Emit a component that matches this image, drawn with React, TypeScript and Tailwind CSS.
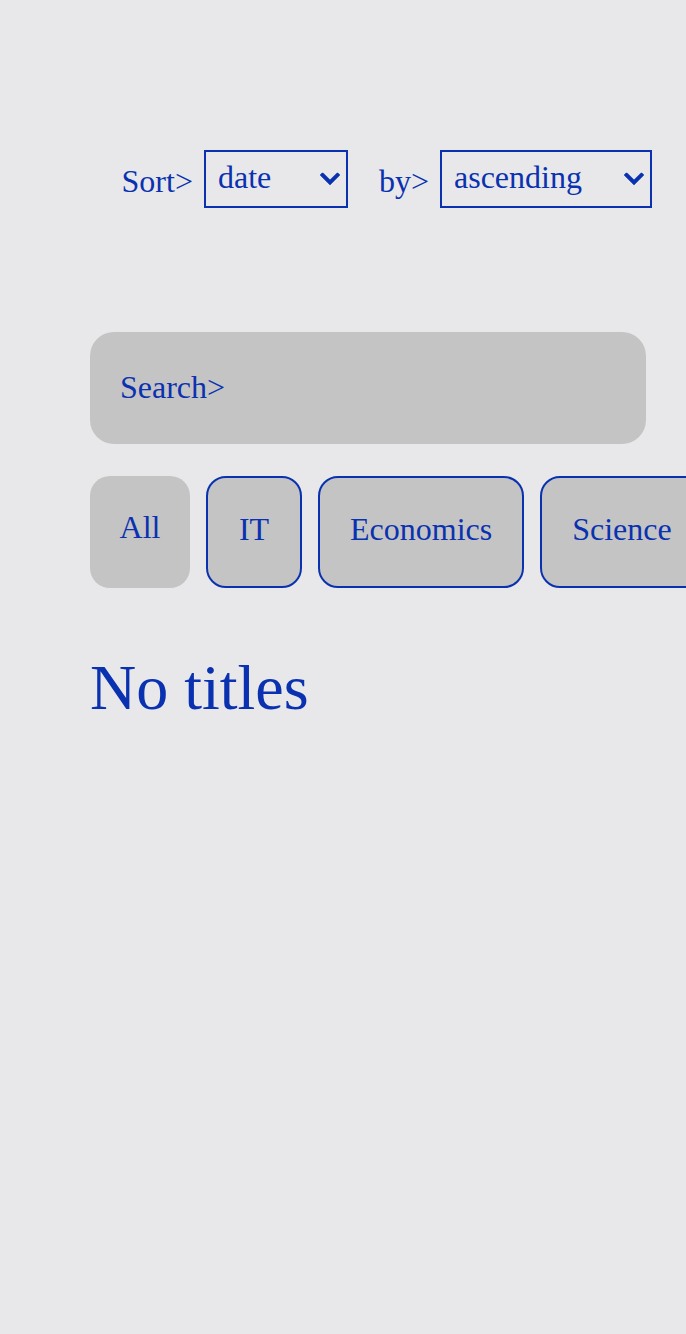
import React, { useState } from "react";

const categories = ["All", "IT", "Economics", "Science"];

const Chevron = () => (
  <svg
    className="pointer-events-none absolute right-[8px] top-1/2 -translate-y-1/2"
    width="20"
    height="13"
    viewBox="0 0 20 13"
    fill="none"
  >
    <path d="M2.5 2.5 L10 10 L17.5 2.5" stroke="#0a32b0" strokeWidth="4" strokeLinecap="square" />
  </svg>
);

const SortSelect = ({ options, width }: { options: string[]; width: string }) => {
  const [value, setValue] = useState(options[0]);
  return (
    <div className={`relative ${width} h-[58px]`}>
      <select
        value={value}
        onChange={e => setValue(e.target.value)}
        className="appearance-none w-full h-full border-2 border-[#0a32b0] bg-transparent pl-[12px] pb-[4px] text-[32px] leading-[36px] text-[#0a32b0] outline-none font-['Liberation_Serif',serif]"
      >
        {options.map(o => (
          <option key={o} value={o}>
            {o}
          </option>
        ))}
      </select>
      <Chevron />
    </div>
  );
};

const App = () => {
  const [active, setActive] = useState("All");
  const [query, setQuery] = useState("");

  return (
    <div className="min-h-screen w-full overflow-hidden bg-[#e8e8ea] text-[#0a32b0] font-['Liberation_Serif',serif]">
      {/* sort controls */}
      <div className="flex items-center justify-end pt-[150px] pr-[34px]">
        <span className="mt-[4px] text-[32px] leading-[36px]">Sort&gt;</span>
        <div className="ml-[11px]">
          <SortSelect options={["date", "title"]} width="w-[144px]" />
        </div>
        <span className="ml-[31px] mt-[4px] text-[32px] leading-[36px]">by&gt;</span>
        <div className="ml-[11px]">
          <SortSelect options={["ascending", "descending"]} width="w-[212px]" />
        </div>
      </div>

      {/* search */}
      <div className="mt-[124px] ml-[90px] w-[556px] h-[112px] rounded-[24px] bg-[#c4c4c4] flex items-center px-[30px]">
        <input
          value={query}
          onChange={e => setQuery(e.target.value)}
          placeholder="Search>"
          className="w-full bg-transparent pb-[2px] text-[32px] leading-[36px] text-[#0a32b0] placeholder:text-[#0a32b0] outline-none font-['Liberation_Serif',serif]"
        />
      </div>

      {/* categories */}
      <div className="mt-[32px] pl-[90px] flex gap-4 whitespace-nowrap">
        {categories.map(c => (
          <button
            key={c}
            onClick={() => setActive(c)}
            className={
              c === active
                ? "shrink-0 h-[112px] min-w-[100px] rounded-[20px] bg-[#c4c4c4] px-[29px] pb-[10px] text-[32px] leading-[36px] text-[#0a32b0] font-['Liberation_Serif',serif]"
                : "shrink-0 h-[112px] min-w-[96px] rounded-[20px] border-2 border-[#0a32b0] bg-[#c4c4c4] px-[30px] pb-[6px] text-[32px] leading-[36px] text-[#0a32b0] font-['Liberation_Serif',serif]"
            }
          >
            {c}
          </button>
        ))}
      </div>

      <h2 className="mt-[63px] ml-[90px] text-[64px] leading-[74px]">No titles</h2>
    </div>
  );
};

export default App;
